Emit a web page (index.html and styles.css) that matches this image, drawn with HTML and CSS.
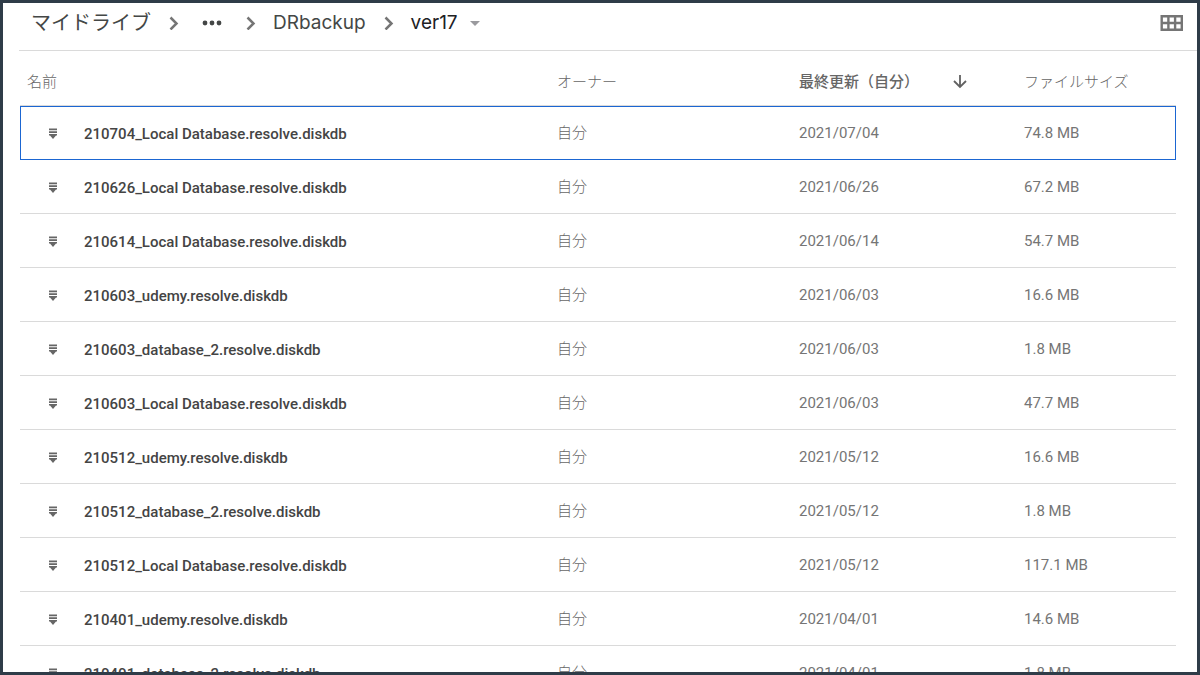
FILE: index.html
```html
<!DOCTYPE html>
<html lang="ja">
<head>
<meta charset="utf-8">
<meta name="viewport" content="width=device-width, initial-scale=1">
<title>ver17</title>
<link rel="stylesheet" href="styles.css">
</head>
<body>
<svg class="symbols" aria-hidden="true">
  <symbol id="chevron" viewBox="0 0 10 14"><path d="M1.500 1.500 7.500 7.500l-6 6" fill="none" stroke="currentColor" stroke-width="2.500"/></symbol>
  <symbol id="file" viewBox="0 0 8 12"><path d="M0 0.500h8v1.800H0zM0 3.200h8V5H0zM0 6h8v1.500H7L4 11 1 7.500H0z" fill="currentColor"/></symbol>
</svg>
<div class="drive">
  <header class="toolbar">
    <nav class="breadcrumb" aria-label="パス">
      <a class="crumb" href="#">マイドライブ</a>
      <svg class="chevron"><use href="#chevron"/></svg>
      <button class="more" type="button" aria-label="その他">
        <svg class="dots" viewBox="0 0 20 6"><circle cx="3" cy="3" r="2.400"/><circle cx="10" cy="3" r="2.400"/><circle cx="17" cy="3" r="2.400"/></svg>
      </button>
      <svg class="chevron"><use href="#chevron"/></svg>
      <a class="crumb latin" href="#">DRbackup</a>
      <svg class="chevron"><use href="#chevron"/></svg>
      <button class="current latin" type="button">ver17 <svg class="caret" viewBox="0 0 10 5"><path d="M0 0h10L5 5z"/></svg></button>
    </nav>
    <button class="view" type="button" aria-label="グリッド表示">
      <svg class="grid" viewBox="0 0 23 16"><path d="M0.500 0H23v16H0.500zM2.900 2.400v4.400h4.300V2.400zM9.600 2.400v4.400h4.300V2.400zM16.300 2.400v4.400h4.300V2.400zM2.900 9.200v4.400h4.300V9.200zM9.600 9.200v4.400h4.300V9.200zM16.300 9.200v4.400h4.300V9.200z" fill-rule="evenodd"/></svg>
    </button>
  </header>
  <main class="content">
    <table class="files">
      <colgroup><col><col class="col-owner"><col class="col-date"><col class="col-size"></colgroup>
      <thead>
        <tr>
          <th class="name-head" scope="col">名前</th>
          <th scope="col">オーナー</th>
          <th scope="col" aria-sort="descending"><button class="sort" type="button">最終更新（自分）<svg class="arrow" viewBox="0 0 14 15"><path d="M7 1v12M1 7l6 6 6-6" fill="none" stroke="currentColor" stroke-width="1.800"/></svg></button></th>
          <th scope="col">ファイルサイズ</th>
        </tr>
      </thead>
      <tbody>
        <tr class="selected"><td><div class="name"><svg class="file"><use href="#file"/></svg>210704_Local Database.resolve.diskdb</div></td><td class="owner">自分</td><td>2021/07/04</td><td>74.8 MB</td></tr>
        <tr><td><div class="name"><svg class="file"><use href="#file"/></svg>210626_Local Database.resolve.diskdb</div></td><td class="owner">自分</td><td>2021/06/26</td><td>67.2 MB</td></tr>
        <tr><td><div class="name"><svg class="file"><use href="#file"/></svg>210614_Local Database.resolve.diskdb</div></td><td class="owner">自分</td><td>2021/06/14</td><td>54.7 MB</td></tr>
        <tr><td><div class="name"><svg class="file"><use href="#file"/></svg>210603_udemy.resolve.diskdb</div></td><td class="owner">自分</td><td>2021/06/03</td><td>16.6 MB</td></tr>
        <tr><td><div class="name"><svg class="file"><use href="#file"/></svg>210603_database_2.resolve.diskdb</div></td><td class="owner">自分</td><td>2021/06/03</td><td>1.8 MB</td></tr>
        <tr><td><div class="name"><svg class="file"><use href="#file"/></svg>210603_Local Database.resolve.diskdb</div></td><td class="owner">自分</td><td>2021/06/03</td><td>47.7 MB</td></tr>
        <tr><td><div class="name"><svg class="file"><use href="#file"/></svg>210512_udemy.resolve.diskdb</div></td><td class="owner">自分</td><td>2021/05/12</td><td>16.6 MB</td></tr>
        <tr><td><div class="name"><svg class="file"><use href="#file"/></svg>210512_database_2.resolve.diskdb</div></td><td class="owner">自分</td><td>2021/05/12</td><td>1.8 MB</td></tr>
        <tr><td><div class="name"><svg class="file"><use href="#file"/></svg>210512_Local Database.resolve.diskdb</div></td><td class="owner">自分</td><td>2021/05/12</td><td>117.1 MB</td></tr>
        <tr><td><div class="name"><svg class="file"><use href="#file"/></svg>210401_udemy.resolve.diskdb</div></td><td class="owner">自分</td><td>2021/04/01</td><td>14.6 MB</td></tr>
        <tr><td><div class="name"><svg class="file"><use href="#file"/></svg>210401_database_2.resolve.diskdb</div></td><td class="owner">自分</td><td>2021/04/01</td><td>1.8 MB</td></tr>
      </tbody>
    </table>
  </main>
</div>
</body>
</html>
```
FILE: styles.css
```css
* {
  box-sizing: border-box;
}

body {
  margin: 0;
  font-family: Roboto, "Noto Sans CJK JP", sans-serif;
  color: #757575;
}

button {
  display: flex;
  align-items: center;
  padding: 0;
  border: 0;
  background: none;
  color: inherit;
  font: inherit;
  cursor: pointer;
}

svg {
  display: block;
  flex: none;
  fill: currentColor;
}

.symbols {
  position: absolute;
  width: 0;
  height: 0;
}

.drive {
  display: flex;
  flex-direction: column;
  height: 100vh;
  overflow: hidden;
  border: 3px solid #2f3c48;
  background: #fff;
}

.toolbar {
  display: flex;
  flex: none;
  justify-content: space-between;
  margin-left: 16px;
  padding: 4px 14px 11px 12px;
  border-bottom: 1px solid #dadada;
}

.breadcrumb {
  display: flex;
  align-items: center;
  font-family: Inter, "Noto Sans CJK JP", sans-serif;
  font-size: 20px;
  line-height: 32px;
  color: #444746;
}

.crumb {
  color: inherit;
  text-decoration: none;
}

.latin {
  font-size: 19px;
}

.chevron {
  width: 10px;
  height: 14px;
  margin: 0 17px 0 18px;
  color: #757575;
}

.more {
  margin: 0 6px;
}

.dots {
  width: 20px;
  height: 6px;
}

.current {
  gap: 12px;
  color: #202124;
}

.caret {
  width: 10px;
  height: 5px;
  color: #9a9a9e;
}

.grid {
  width: 23px;
  height: 16px;
}

.content {
  flex: 1;
  min-height: 0;
  overflow: hidden;
  padding: 0 21px 0 17px;
}

.files {
  width: 100%;
  table-layout: fixed;
  border-spacing: 0;
  font-size: 15px;
  line-height: 20px;
}

.col-owner {
  width: 242px;
}

.col-date {
  width: 225px;
}

.col-size {
  width: 152px;
}

th {
  height: 55px;
  padding: 7px 0 0;
  border-bottom: 1px solid #dadada;
  font-weight: 300;
  text-align: left;
  color: #666;
}

.name-head {
  padding-left: 7px;
}

.sort {
  gap: 34px;
  font-weight: 500;
}

.arrow {
  width: 14px;
  height: 15px;
  color: #616161;
}

td {
  height: 54px;
  padding: 0;
  border-bottom: 1px solid #dadada;
}

.owner {
  font-weight: 300;
  color: #666;
}

.selected {
  outline: 1px solid #1b66d2;
  outline-offset: -1px;
}

.name {
  display: flex;
  align-items: center;
  gap: 27px;
  padding: 2px 0 0 29px;
  font-weight: 500;
  color: #444;
}

.file {
  width: 8px;
  height: 12px;
  color: #666;
}
```
